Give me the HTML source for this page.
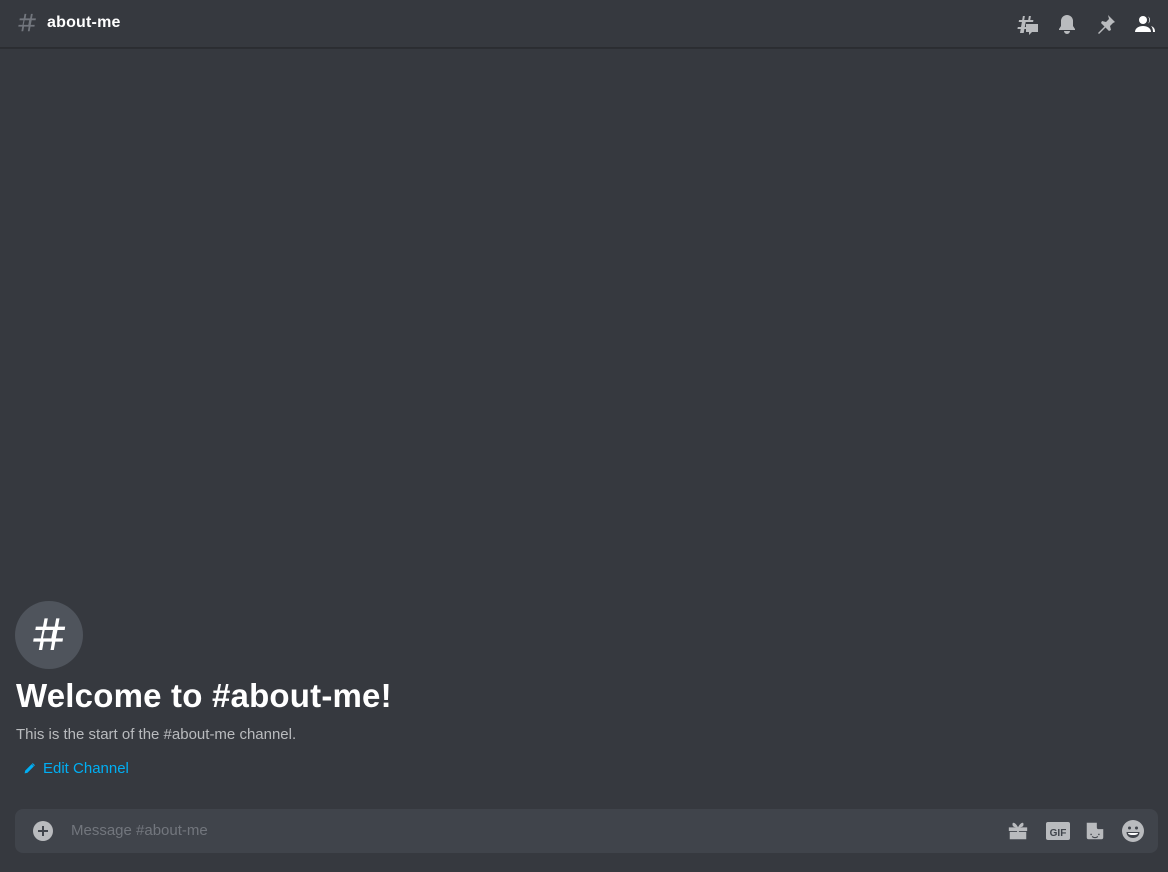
<!DOCTYPE html>
<html><head><style>
*{margin:0;padding:0;box-sizing:border-box}
body{width:1168px;height:872px;background:#36393f;font-family:"Liberation Sans",sans-serif;position:relative;overflow:hidden}
.hdr{position:absolute;left:0;top:0;width:1168px;height:48px;border-bottom:1px solid #2b2d31;box-shadow:0 1px 0 rgba(4,4,5,.2)}
.hash{position:absolute;left:16px;top:12px}
.title{position:absolute;left:47px;top:14px;color:#fff;font-weight:bold;font-size:16px;letter-spacing:0.2px}
.ic{position:absolute;top:12px}
.av{position:absolute;left:15px;top:601px;width:68px;height:68px;border-radius:50%;background:#4f545c}
h1{position:absolute;left:16px;top:677px;color:#fff;font-size:33px;font-weight:bold;letter-spacing:0.2px}
.sub{position:absolute;left:16px;top:726px;color:#b9bbbe;font-size:15px}
.edit{position:absolute;left:23px;top:760px;color:#00aff4;font-size:15px}
.edit span{margin-left:20px}
.inp{position:absolute;left:15px;top:809px;width:1143px;height:44px;background:#40444b;border-radius:8px}
.ph{position:absolute;left:56px;top:13px;color:#72767d;font-size:15px}
</style></head><body>
<div class="hdr">
<svg class="hash" width="22" height="22" viewBox="0 0 24 24"><path fill="#72767d" d="M5.9 21l.9-5H2.5l.3-2h4.3l1-5H3.8l.3-2h4.3l.9-5h2l-.9 5h5l.9-5h2l-.9 5h4.3l-.3 2h-4.3l-1 5h4.3l-.3 2h-4.3l-.9 5h-2l.9-5h-5l-.9 5zm3.5-12l-1 5h5l1-5z"/></svg>
<div class="title">about-me</div>
<svg class="ic" style="left:1016px" width="24" height="24" viewBox="0 0 24 24"><path fill="#b9bbbe" d="M4 21l.7-4H1.5l.3-2h3.2l.9-5H2.7l.3-2h3.2l.7-4h2l-.7 4h4l.7-4h2l-.7 4h3.2l-.3 2H9.7l-.9 5h1.2v2H8.4l-.7 4zM10 12h12v8h-6l-3 3v-3h-3z"/></svg>
<svg class="ic" style="left:1055px" width="24" height="24" viewBox="0 0 24 24"><path fill="#b9bbbe" d="M18 9v5l2 3v1H4v-1l2-3V9a6 6 0 0112 0zM9 19h6a3 3 0 01-6 0z"/></svg>
<svg class="ic" style="left:1094px" width="24" height="24" viewBox="0 0 24 24"><path fill="#b9bbbe" d="M14 3l7 7-2 1-3 3 1 4-2 1-3.5-3.5L5 22l-1-1 6.5-6.5L7 11l1-2 4 1 3-3z"/></svg>
<svg class="ic" style="left:1133px" width="24" height="24" viewBox="0 0 24 24"><circle cx="10" cy="8" r="4" fill="#fff"/><path fill="#fff" d="M2 20c0-4 4-6 8-6s8 2 8 6zM15 4.5a4 4 0 010 7 5 5 0 000-7zM18 14c3 1 4 3 4 6h-2c0-3-1-5-2-6z"/></svg>
</div>
<div class="av"><svg style="position:absolute;left:14px;top:14px" width="40" height="40" viewBox="0 0 24 24"><path fill="#fff" d="M5.9 21l.9-5H2.5l.3-2h4.3l1-5H3.8l.3-2h4.3l.9-5h2l-.9 5h5l.9-5h2l-.9 5h4.3l-.3 2h-4.3l-1 5h4.3l-.3 2h-4.3l-.9 5h-2l.9-5h-5l-.9 5zm3.5-12l-1 5h5l1-5z"/></svg></div>
<h1>Welcome to #about-me!</h1>
<div class="sub">This is the start of the #about-me channel.</div>
<div class="edit"><svg style="position:absolute;left:0;top:2px" width="13" height="13" viewBox="0 0 24 24"><path fill="#00aff4" d="M3 21l1-5L16 4l4 4L8 20zM18 2l4 4-1.5 1.5-4-4z"/></svg><span>Edit Channel</span></div>
<div class="inp">
<svg style="position:absolute;left:18px;top:12px" width="20" height="20" viewBox="0 0 20 20"><circle cx="10" cy="10" r="10" fill="#b9bbbe"/><path fill="#40444b" d="M9 5h2v4h4v2h-4v4H9v-4H5V9h4z"/></svg>
<div class="ph">Message #about-me</div>
<svg style="position:absolute;left:992px;top:11px" width="22" height="22" viewBox="0 0 24 24"><path fill="#b9bbbe" d="M2 8h20v4H2zM3 13h8v8H3zM13 13h8v8h-8zM11 8h2v13h-2zM7 3c2 0 4 3 5 5-2 0-6 0-6-3 0-1 0-2 1-2zM17 3c-2 0-4 3-5 5 2 0 6 0 6-3 0-1 0-2-1-2z"/></svg>
<svg style="position:absolute;left:1030px;top:11px" width="26" height="22" viewBox="0 0 26 22"><rect x="1" y="2" width="24" height="18" rx="2" fill="#b9bbbe"/><text x="13" y="16" text-anchor="middle" font-family="Liberation Sans" font-weight="bold" font-size="10" fill="#40444b">GIF</text></svg>
<svg style="position:absolute;left:1069px;top:11px" width="22" height="22" viewBox="0 0 24 24"><path fill="#b9bbbe" d="M3 3h11l7 7v9a2 2 0 01-2 2H5a2 2 0 01-2-2zM14 3v5a2 2 0 002 2h5z"/><path fill="#40444b" d="M7 15h1.5v1.5H7zM15.5 15H17v1.5h-1.5zM9 17.5c2 1.5 4 1.5 6 0l.5 1c-2.5 1.7-4.5 1.7-7 0z"/></svg>
<svg style="position:absolute;left:1106px;top:10px" width="24" height="24" viewBox="0 0 24 24"><circle cx="12" cy="12" r="11" fill="#b9bbbe"/><circle cx="8.5" cy="9" r="1.5" fill="#40444b"/><circle cx="15.5" cy="9" r="1.5" fill="#40444b"/><path fill="#40444b" d="M5.5 13h13c0 4-3 6-6.5 6s-6.5-2-6.5-6z"/><path fill="#fff" d="M7 14h10c0 1-1 2-5 2s-5-1-5-2z"/></svg>
</div>
</body></html>
